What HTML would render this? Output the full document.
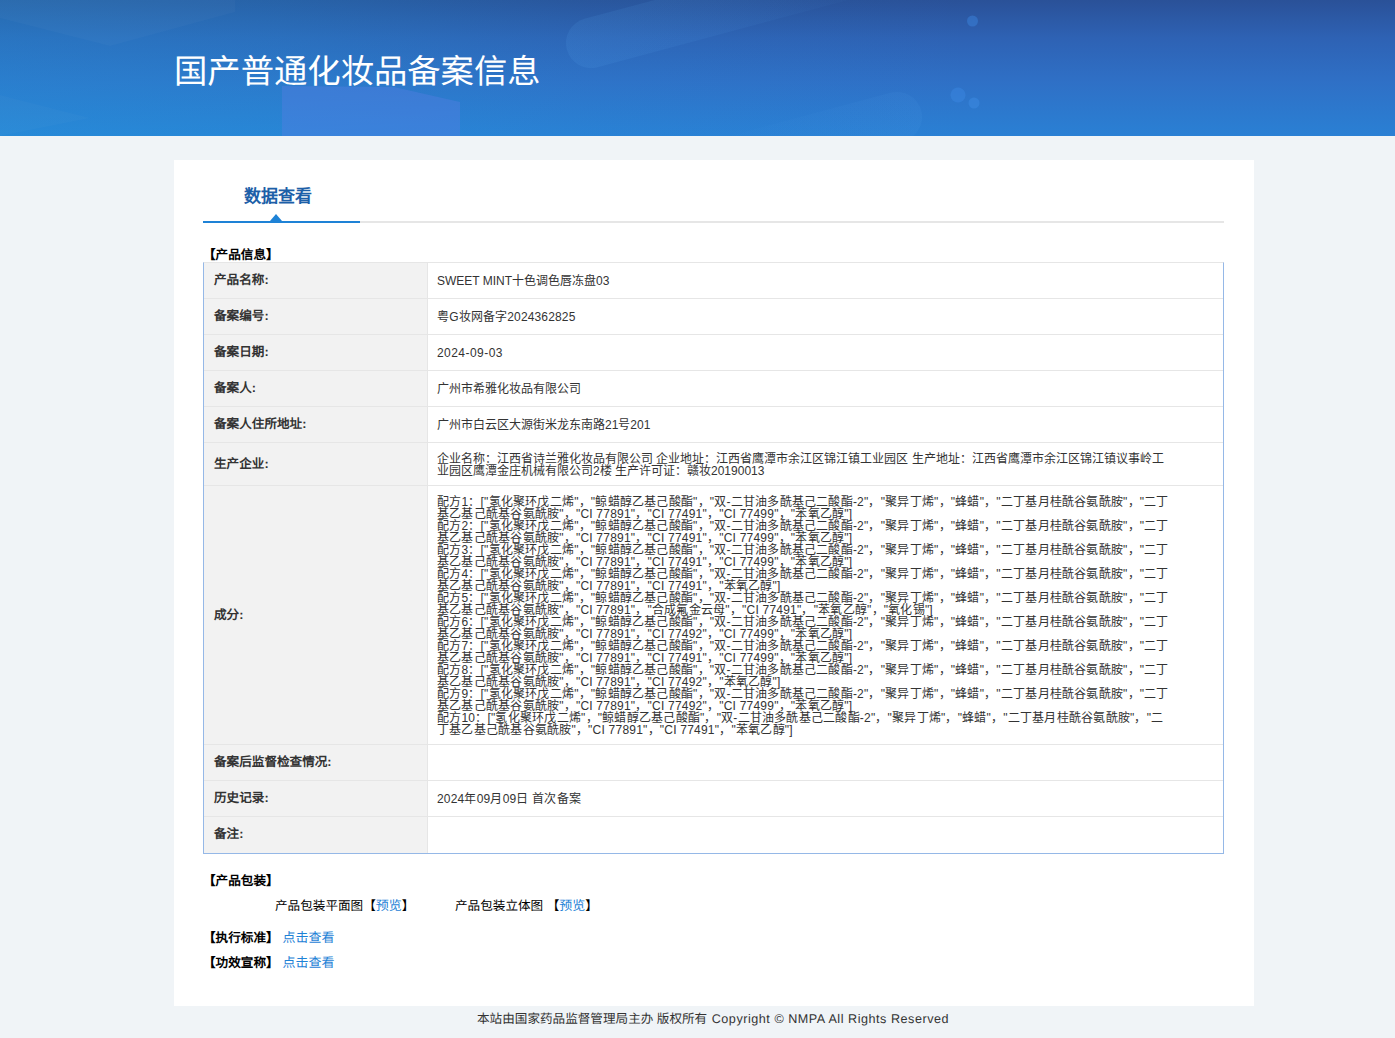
<!DOCTYPE html>
<html lang="zh-CN">
<head>
<meta charset="utf-8">
<title>国产普通化妆品备案信息</title>
<style>
html,body{margin:0;padding:0}
body{width:1395px;height:1038px;overflow:hidden;position:relative;background:#f0f4f7;font-family:"Liberation Sans",sans-serif;color:#333}
.banner{position:absolute;left:0;top:0;width:1395px;height:136px;overflow:hidden;background:linear-gradient(180deg,#2a529b 0%,#2d62b6 30%,#2c70c6 62%,#2880d2 100%)}
.banner svg.bg{position:absolute;left:0;top:0;display:block}
.banner h1{position:absolute;left:174px;top:50px;margin:0;font-size:33.33px;line-height:46px;letter-spacing:0;text-rendering:geometricPrecision;font-weight:normal;color:#fff;white-space:nowrap}
.card{position:absolute;left:174px;top:160px;width:1080px;height:846px;background:#fff}
.tabbar{position:absolute;left:29px;top:61px;width:1021px;height:2px;background:#e6e6e6}
.tabbar .on{position:absolute;left:0;top:0;width:157px;height:2px;background:#1e82d6}
.tabbar .tri{position:absolute;left:67px;top:-7px;width:0;height:0;border-left:6.5px solid transparent;border-right:6.5px solid transparent;border-bottom:7px solid #1e82d6}
.tabname{position:absolute;left:70px;top:25px;font-size:17px;line-height:24px;font-weight:bold;color:#1d5fa8;white-space:nowrap}
.sec{position:absolute;left:29px;font-size:12.6px;line-height:17px;font-weight:bold;color:#000;white-space:nowrap}
.grid{position:absolute;left:29px;top:102px;width:1021px;height:592px;box-sizing:border-box;border:1px solid #95b8e7;border-top-color:#e6e6e6}
.grid table{border-collapse:separate;border-spacing:0;width:1019px;table-layout:fixed}
.grid th,.grid td{box-sizing:border-box;padding:0 10px;vertical-align:middle;text-align:left;border-top:1px solid #e6e6e6;white-space:nowrap}
.grid tr:first-child th,.grid tr:first-child td{border-top:0}
.grid th{width:224px;background:#f2f2f2;border-right:1px solid #e6e6e6;font-size:12.6px;line-height:17px;font-weight:bold;color:#333}
.grid td{width:795px;padding-left:9px;font-size:12px;line-height:12px;color:#333}
.grid td.ml{padding-top:2px}
.grid td.ing{letter-spacing:.22px}
.grid tr.last th,.grid tr.last td{padding-bottom:1px}
.plain{position:absolute;font-size:12.6px;line-height:17px;color:#000;white-space:nowrap}
.grid th,.sec,.plain,.foot{text-rendering:geometricPrecision}
.j{display:inline-block;white-space:nowrap;text-align:justify;text-align-last:justify}
a{color:#1e82d6;text-decoration:none}
.sec .lk{font-weight:normal;font-size:13px;margin-left:4px}
.plain a{font-size:13px}
.foot{position:absolute;left:477px;top:1010px;font-size:12.6px;line-height:18px;color:#333;white-space:nowrap}
.foot .en{letter-spacing:.53px;margin-left:1px}
</style>
</head>
<body>
<div class="banner">
  <svg class="bg" width="1395" height="136" viewBox="0 0 1395 136" aria-hidden="true">
    <defs>
      <linearGradient id="gv" x1="0" y1="0" x2="0" y2="1">
        <stop offset="0" stop-color="#2a5198"/>
        <stop offset="0.28" stop-color="#2e62b4"/>
        <stop offset="0.6" stop-color="#2f70c6"/>
        <stop offset="1" stop-color="#2a80d4"/>
      </linearGradient>
      <linearGradient id="gh" x1="0" y1="0" x2="1" y2="0">
        <stop offset="0" stop-color="#1fa0e0" stop-opacity="0.30"/>
        <stop offset="0.2" stop-color="#1fa0e0" stop-opacity="0.22"/>
        <stop offset="0.42" stop-color="#1fa0e0" stop-opacity="0.07"/>
        <stop offset="0.7" stop-color="#1fa0e0" stop-opacity="0"/>
      </linearGradient>
      <linearGradient id="gp1" x1="0" y1="0" x2="1" y2="0">
        <stop offset="0" stop-color="#58a6ee" stop-opacity="0.13"/>
        <stop offset="0.5" stop-color="#58a6ee" stop-opacity="0.08"/>
        <stop offset="1" stop-color="#58a6ee" stop-opacity="0"/>
      </linearGradient>
      <linearGradient id="gp2" x1="0" y1="0" x2="1" y2="0">
        <stop offset="0" stop-color="#58a6ee" stop-opacity="0"/>
        <stop offset="0.5" stop-color="#58a6ee" stop-opacity="0.04"/>
        <stop offset="1" stop-color="#58a6ee" stop-opacity="0.09"/>
      </linearGradient>
      <filter id="soft" x="-20%" y="-20%" width="140%" height="140%"><feGaussianBlur stdDeviation="0.7"/></filter>
    </defs>
    <rect width="1395" height="136" fill="url(#gv)"/>
    <rect width="1395" height="136" fill="url(#gh)"/>
    <polygon points="0,18 110,46 235,12 235,0 0,0" fill="#fff" fill-opacity="0.022"/>
    <polygon points="0,95 90,118 0,136" fill="#fff" fill-opacity="0.02"/>
    <polygon points="282,86 394,87 460,102 460,136 282,136" fill="#5a7ee6" fill-opacity="0.38"/>
    <rect x="566" y="18" width="330" height="50" rx="25" fill="url(#gp1)" transform="rotate(-15 591 43)"/>
    <rect x="690" y="92" width="232" height="50" rx="25" fill="url(#gp2)" transform="rotate(-15 897 117)"/>
    <g filter="url(#soft)">
      <circle cx="972.5" cy="21" r="5.5" fill="#3b8be4" fill-opacity="0.42"/>
      <circle cx="958" cy="95" r="7.5" fill="#3b8be4" fill-opacity="0.42"/>
      <circle cx="974" cy="103" r="5.5" fill="#3b8be4" fill-opacity="0.5"/>
    </g>
  </svg>
  <h1><span class="j" style="width:366.609px">国产普通化妆品备案信息</span></h1>
</div>
<div class="card">
  <div class="tabname"><span class="j" style="width:68px">数据查看</span></div>
  <div class="tabbar"><div class="on"></div><div class="tri"></div></div>
  <div class="sec" style="top:87px"><span class="j" style="width:75.562px">【产品信息】</span></div>
  <div class="grid">
    <table>
      <tr style="height:35px"><th><span class="j" style="width:54.578px">产品名称:</span></th><td><span class="j" style="width:172.469px">SWEET MINT十色调色唇冻盘03</span></td></tr>
      <tr style="height:36px"><th><span class="j" style="width:54.578px">备案编号:</span></th><td style="letter-spacing:.15px"><span class="j" style="width:138.484px">粤G妆网备字2024362825</span></td></tr>
      <tr style="height:36px"><th><span class="j" style="width:54.578px">备案日期:</span></th><td style="letter-spacing:.45px"><span class="j" style="width:65.891px">2024-09-03</span></td></tr>
      <tr style="height:36px"><th><span class="j" style="width:41.984px">备案人:</span></th><td><span class="j" style="width:144px">广州市希雅化妆品有限公司</span></td></tr>
      <tr style="height:36px"><th><span class="j" style="width:92.359px">备案人住所地址:</span></th><td><span class="j" style="width:213.375px">广州市白云区大源街米龙东南路21号201</span></td></tr>
      <tr style="height:43px"><th><span class="j" style="width:54.578px">生产企业:</span></th><td class="ml"><span class="j" style="width:726.672px">企业名称：江西省诗兰雅化妆品有限公司 企业地址：江西省鹰潭市余江区锦江镇工业园区 生产地址：江西省鹰潭市余江区锦江镇议事岭工</span><br><span class="j" style="width:327.406px">业园区鹰潭金庄机械有限公司2楼 生产许可证：赣妆20190013</span></td></tr>
      <tr style="height:259px"><th><span class="j" style="width:29.391px">成分:</span></th><td class="ml ing">
        <span class="j" style="width:731.672px">配方1：[&quot;氢化聚环戊二烯&quot;，&quot;鲸蜡醇乙基己酸酯&quot;，&quot;双-二甘油多酰基己二酸酯-2&quot;，&quot;聚异丁烯&quot;，&quot;蜂蜡&quot;，&quot;二丁基月桂酰谷氨酰胺&quot;，&quot;二丁</span><br>
        <span class="j" style="width:415.234px">基乙基己酰基谷氨酰胺&quot;，&quot;CI 77891&quot;，&quot;CI 77491&quot;，&quot;CI 77499&quot;，&quot;苯氧乙醇&quot;]</span><br>
        <span class="j" style="width:731.672px">配方2：[&quot;氢化聚环戊二烯&quot;，&quot;鲸蜡醇乙基己酸酯&quot;，&quot;双-二甘油多酰基己二酸酯-2&quot;，&quot;聚异丁烯&quot;，&quot;蜂蜡&quot;，&quot;二丁基月桂酰谷氨酰胺&quot;，&quot;二丁</span><br>
        <span class="j" style="width:415.234px">基乙基己酰基谷氨酰胺&quot;，&quot;CI 77891&quot;，&quot;CI 77491&quot;，&quot;CI 77499&quot;，&quot;苯氧乙醇&quot;]</span><br>
        <span class="j" style="width:731.672px">配方3：[&quot;氢化聚环戊二烯&quot;，&quot;鲸蜡醇乙基己酸酯&quot;，&quot;双-二甘油多酰基己二酸酯-2&quot;，&quot;聚异丁烯&quot;，&quot;蜂蜡&quot;，&quot;二丁基月桂酰谷氨酰胺&quot;，&quot;二丁</span><br>
        <span class="j" style="width:415.234px">基乙基己酰基谷氨酰胺&quot;，&quot;CI 77891&quot;，&quot;CI 77491&quot;，&quot;CI 77499&quot;，&quot;苯氧乙醇&quot;]</span><br>
        <span class="j" style="width:731.672px">配方4：[&quot;氢化聚环戊二烯&quot;，&quot;鲸蜡醇乙基己酸酯&quot;，&quot;双-二甘油多酰基己二酸酯-2&quot;，&quot;聚异丁烯&quot;，&quot;蜂蜡&quot;，&quot;二丁基月桂酰谷氨酰胺&quot;，&quot;二丁</span><br>
        <span class="j" style="width:343.578px">基乙基己酰基谷氨酰胺&quot;，&quot;CI 77891&quot;，&quot;CI 77491&quot;，&quot;苯氧乙醇&quot;]</span><br>
        <span class="j" style="width:731.672px">配方5：[&quot;氢化聚环戊二烯&quot;，&quot;鲸蜡醇乙基己酸酯&quot;，&quot;双-二甘油多酰基己二酸酯-2&quot;，&quot;聚异丁烯&quot;，&quot;蜂蜡&quot;，&quot;二丁基月桂酰谷氨酰胺&quot;，&quot;二丁</span><br>
        <span class="j" style="width:495.922px">基乙基己酰基谷氨酰胺&quot;，&quot;CI 77891&quot;，&quot;合成氟金云母&quot;，&quot;CI 77491&quot;，&quot;苯氧乙醇&quot;，&quot;氧化锡&quot;]</span><br>
        <span class="j" style="width:731.672px">配方6：[&quot;氢化聚环戊二烯&quot;，&quot;鲸蜡醇乙基己酸酯&quot;，&quot;双-二甘油多酰基己二酸酯-2&quot;，&quot;聚异丁烯&quot;，&quot;蜂蜡&quot;，&quot;二丁基月桂酰谷氨酰胺&quot;，&quot;二丁</span><br>
        <span class="j" style="width:415.234px">基乙基己酰基谷氨酰胺&quot;，&quot;CI 77891&quot;，&quot;CI 77492&quot;，&quot;CI 77499&quot;，&quot;苯氧乙醇&quot;]</span><br>
        <span class="j" style="width:731.672px">配方7：[&quot;氢化聚环戊二烯&quot;，&quot;鲸蜡醇乙基己酸酯&quot;，&quot;双-二甘油多酰基己二酸酯-2&quot;，&quot;聚异丁烯&quot;，&quot;蜂蜡&quot;，&quot;二丁基月桂酰谷氨酰胺&quot;，&quot;二丁</span><br>
        <span class="j" style="width:415.234px">基乙基己酰基谷氨酰胺&quot;，&quot;CI 77891&quot;，&quot;CI 77491&quot;，&quot;CI 77499&quot;，&quot;苯氧乙醇&quot;]</span><br>
        <span class="j" style="width:731.672px">配方8：[&quot;氢化聚环戊二烯&quot;，&quot;鲸蜡醇乙基己酸酯&quot;，&quot;双-二甘油多酰基己二酸酯-2&quot;，&quot;聚异丁烯&quot;，&quot;蜂蜡&quot;，&quot;二丁基月桂酰谷氨酰胺&quot;，&quot;二丁</span><br>
        <span class="j" style="width:343.578px">基乙基己酰基谷氨酰胺&quot;，&quot;CI 77891&quot;，&quot;CI 77492&quot;，&quot;苯氧乙醇&quot;]</span><br>
        <span class="j" style="width:731.672px">配方9：[&quot;氢化聚环戊二烯&quot;，&quot;鲸蜡醇乙基己酸酯&quot;，&quot;双-二甘油多酰基己二酸酯-2&quot;，&quot;聚异丁烯&quot;，&quot;蜂蜡&quot;，&quot;二丁基月桂酰谷氨酰胺&quot;，&quot;二丁</span><br>
        <span class="j" style="width:415.234px">基乙基己酰基谷氨酰胺&quot;，&quot;CI 77891&quot;，&quot;CI 77492&quot;，&quot;CI 77499&quot;，&quot;苯氧乙醇&quot;]</span><br>
        <span class="j" style="width:726.344px">配方10：[&quot;氢化聚环戊二烯&quot;，&quot;鲸蜡醇乙基己酸酯&quot;，&quot;双-二甘油多酰基己二酸酯-2&quot;，&quot;聚异丁烯&quot;，&quot;蜂蜡&quot;，&quot;二丁基月桂酰谷氨酰胺&quot;，&quot;二</span><br>
        <span class="j" style="width:355.812px">丁基乙基己酰基谷氨酰胺&quot;，&quot;CI 77891&quot;，&quot;CI 77491&quot;，&quot;苯氧乙醇&quot;]</span>
      </td></tr>
      <tr style="height:36px"><th><span class="j" style="width:117.547px">备案后监督检查情况:</span></th><td></td></tr>
      <tr style="height:36px"><th><span class="j" style="width:54.578px">历史记录:</span></th><td style="letter-spacing:.2px"><span class="j" style="width:143.938px">2024年09月09日 首次备案</span></td></tr>
      <tr class="last" style="height:37px"><th><span class="j" style="width:29.391px">备注:</span></th><td></td></tr>
    </table>
  </div>
  <div class="sec" style="top:713px"><span class="j" style="width:75.562px">【产品包装】</span></div>
  <div class="plain" style="left:101px;top:737px"><span class="j" style="width:139.359px">产品包装平面图【<a>预览</a>】</span></div>
  <div class="plain" style="left:281px;top:737px"><span class="j" style="width:142.859px">产品包装立体图 【<a>预览</a>】</span></div>
  <div class="sec" style="top:769px"><span class="j" style="width:131.578px">【执行标准】<a class="lk">点击查看</a></span></div>
  <div class="sec" style="top:794px"><span class="j" style="width:131.578px">【功效宣称】<a class="lk">点击查看</a></span></div>
</div>
<div class="foot"><span class="j" style="width:230.188px">本站由国家药品监督管理局主办 版权所有</span> <span class="en">Copyright © NMPA All Rights Reserved</span></div>
</body>
</html>
